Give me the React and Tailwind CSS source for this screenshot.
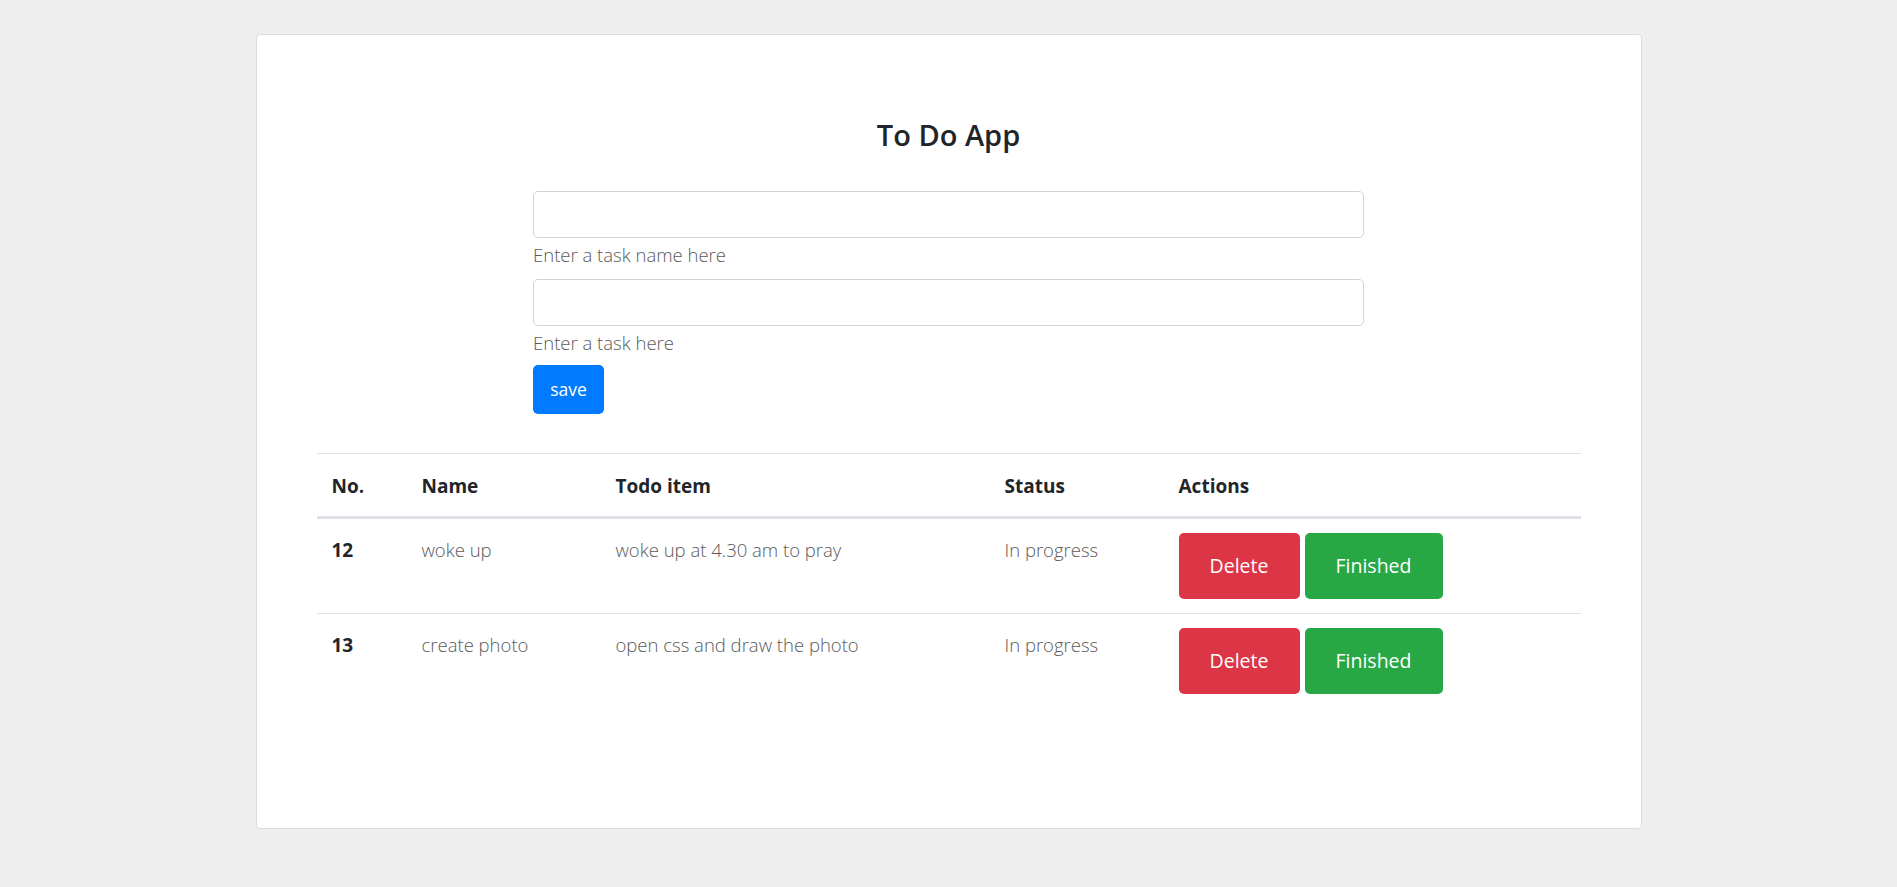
import React from "react";

const todos = [
  { id: 12, name: "woke up", item: "woke up at 4.30 am to pray", status: "In progress" },
  { id: 13, name: "create photo", item: "open css and draw the photo", status: "In progress" },
];

const App = () => {
  return (
    <div
      className="min-h-[887px] bg-[#eeeeee] pt-[34px]"
      style={{ fontFamily: '"Open Sans", "Noto Sans", sans-serif' }}
    >
      <div className="mx-auto h-[795px] w-[1386px] rounded-[4px] border border-[#dcdcdc] bg-white px-[60px]">
        <h3 className="mt-[80px] text-center text-[29px] font-semibold leading-[40px] text-[#212529]">
          To Do App
        </h3>

        {/* form */}
        <div className="mx-auto mt-[36px] w-[831px]">
          <input
            type="text"
            className="block h-[47px] w-full rounded-[5px] border border-[#ced4da] px-3 outline-none"
          />
          <p className="mt-[3px] text-[18.5px] font-light leading-[28px] text-[#5a5a5a]">
            Enter a task name here
          </p>
          <input
            type="text"
            className="mt-[10px] block h-[47px] w-full rounded-[5px] border border-[#ced4da] px-3 outline-none"
          />
          <p className="mt-[3px] text-[18.5px] font-light leading-[28px] text-[#5a5a5a]">
            Enter a task here
          </p>
          <button className="mt-[8px] h-[49px] w-[71px] rounded-[5px] bg-[#007bff] text-[17.5px] text-white">
            save
          </button>
        </div>

        {/* table */}
        <table className="mt-[39px] w-full table-fixed border-collapse text-[18.5px] text-[#212529]">
          <colgroup>
            <col className="w-[90px]" />
            <col className="w-[194px]" />
            <col className="w-[389px]" />
            <col className="w-[174px]" />
            <col />
          </colgroup>
          <thead>
            <tr className="border-t border-[#dee2e6]">
              {["No.", "Name", "Todo item", "Status", "Actions"].map((h) => (
                <th
                  key={h}
                  className="border-b-[3px] border-[#dee2e6] px-[15px] pt-[18px] pb-[16px] text-left text-[19px] font-bold leading-[28px]"
                >
                  {h}
                </th>
              ))}
            </tr>
          </thead>
          <tbody>
            {todos.map((t, i) => (
              <tr key={t.id} className={i === 0 ? "border-b border-[#dee2e6]" : ""}>
                <td className="px-[15px] pt-[17px] pb-[15px] align-top text-[19px] font-bold leading-[28px]">
                  {t.id}
                </td>
                <td className="px-[15px] pt-[17px] pb-[15px] align-top font-light leading-[28px] text-[#5a5a5a]">
                  {t.name}
                </td>
                <td className="px-[15px] pt-[17px] pb-[15px] align-top font-light leading-[28px] text-[#5a5a5a]">
                  {t.item}
                </td>
                <td className="px-[15px] pt-[17px] pb-[15px] align-top font-light leading-[28px] text-[#5a5a5a]">
                  {t.status}
                </td>
                <td className="px-[15px] py-[14px] align-top">
                  <div className="flex gap-[5px]">
                    <button className="h-[66px] w-[121px] rounded-[5px] bg-[#dc3545] text-[19.5px] text-white">
                      Delete
                    </button>
                    <button className="h-[66px] w-[138px] rounded-[5px] bg-[#28a745] text-[19.5px] text-white">
                      Finished
                    </button>
                  </div>
                </td>
              </tr>
            ))}
          </tbody>
        </table>
      </div>
    </div>
  );
};

export default App;
